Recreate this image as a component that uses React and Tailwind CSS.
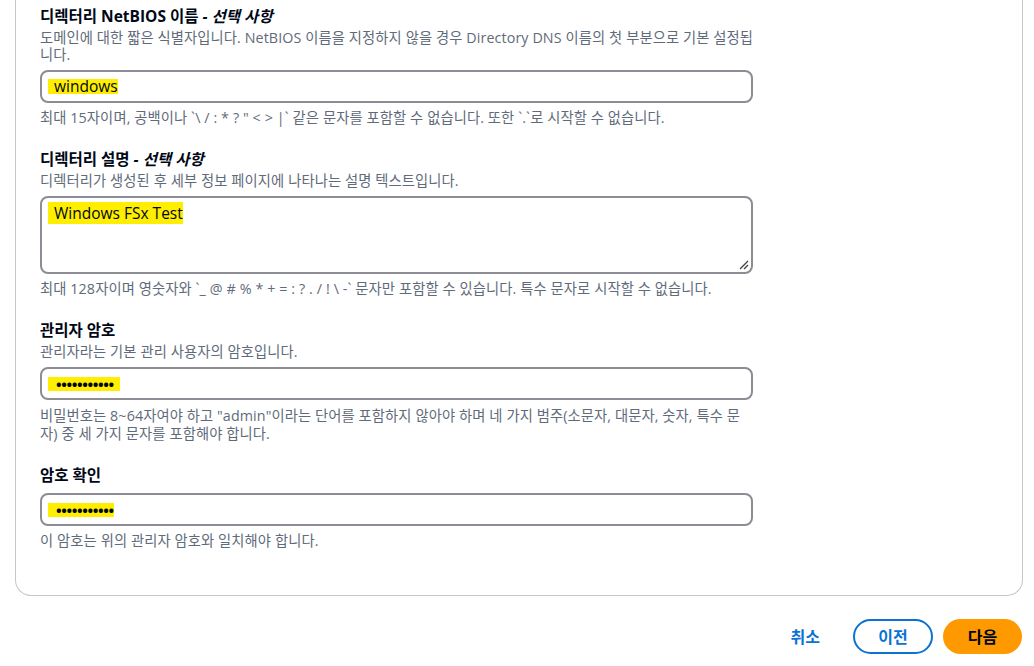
import React from "react";

const FONT = { fontFamily: '"Open Sans", "Noto Sans CJK KR", sans-serif' };

function Label({ children, optional }) {
  return (
    <div className="text-[15.5px] leading-[22px] font-bold text-[#000716]">
      {children}
      {optional && <i className="font-bold"> - 선택 사항</i>}
    </div>
  );
}

function Desc({ children, className = "" }) {
  return (
    <div className={"text-[14.3px] leading-[17px] text-[#5f6b7a] break-all tracking-[0.1px] " + className}>{children}</div>
  );
}

function Hl({ children, className = "" }) {
  return <span className={"bg-[#ffee00] " + className}>{children}</span>;
}

function Input({ children, className = "" }) {
  return (
    <div
      className={
        "h-[33px] w-[713px] border-2 border-[#8c8c94] rounded-[8px] flex items-center pl-[6px] text-[15.5px] text-[#000716] " +
        className
      }
    >
      {children}
    </div>
  );
}

export default function App() {
  return (
    <div className="w-[1034px] h-[666px] bg-white overflow-hidden" style={FONT}>
      <div className="ml-[15px] w-[1008px] border-x border-b border-[#c6c6cd] rounded-b-[16px] pl-[24px] pt-[5px] pb-[46px]">
        {/* Field 1 */}
        <Label optional>디렉터리 NetBIOS 이름</Label>
        <Desc className="w-[722px] mt-[2px]">
          도메인에 대한 짧은 식별자입니다. NetBIOS 이름을 지정하지 않을 경우 Directory DNS 이름의 첫 부분으로 기본 설정됩니다.
        </Desc>
        <Input className="mt-[7px]">
          <Hl className="pl-[6px] leading-[15px]">windows</Hl>
        </Input>
        <Desc className="mt-[6px]">
          최대 15자이며, 공백이나 `\ / : * ? " &lt; &gt; |` 같은 문자를 포함할 수 없습니다. 또한 `.`로 시작할 수 없습니다.
        </Desc>

        {/* Field 2 */}
        <div className="mt-[22px]">
          <Label optional>디렉터리 설명</Label>
        </div>
        <Desc className="mt-[2px]">디렉터리가 생성된 후 세부 정보 페이지에 나타나는 설명 텍스트입니다.</Desc>
        <div className="relative mt-[7px] h-[78px] w-[713px] border-2 border-[#8c8c94] rounded-[8px] pl-[6px] pt-[5px] text-[15.5px] leading-[20px] text-[#000716]">
          <Hl className="pl-[6px] leading-[15px]">Windows FSx Test</Hl>
          <svg className="absolute right-[2px] bottom-[2px]" width="10" height="10" viewBox="0 0 10 10">
            <line x1="1" y1="9" x2="9" y2="1" stroke="#444" strokeWidth="1.2" />
            <line x1="5" y1="9" x2="9" y2="5" stroke="#444" strokeWidth="1.2" />
          </svg>
        </div>
        <Desc className="mt-[6px]">
          최대 128자이며 영숫자와 `_ @ # % * + = : ? . / ! \ -` 문자만 포함할 수 있습니다. 특수 문자로 시작할 수 없습니다.
        </Desc>

        {/* Field 3 */}
        <div className="mt-[22px]">
          <Label>관리자 암호</Label>
        </div>
        <Desc className="mt-[2px]">관리자라는 기본 관리 사용자의 암호입니다.</Desc>
        <Input className="mt-[7px]">
          <Hl className="pl-[8px] pr-[6px] text-[15px] font-bold leading-[14px] tracking-[-0.4px]">•••••••••••</Hl>
        </Input>
        <Desc className="mt-[7px] w-[700px] leading-[18px]">
          비밀번호는 8~64자여야 하고 "admin"이라는 단어를 포함하지 않아야 하며 네 가지 범주(소문자, 대문자, 숫자, 특수 문자) 중 세 가지 문자를 포함해야 합니다.
        </Desc>

        {/* Field 4 */}
        <div className="mt-[21px]">
          <Label>암호 확인</Label>
        </div>
        <Input className="mt-[7px]">
          <Hl className="pl-[8px] text-[15px] font-bold leading-[14px] tracking-[-0.4px]">•••••••••••</Hl>
        </Input>
        <Desc className="mt-[6px]">이 암호는 위의 관리자 암호와 일치해야 합니다.</Desc>
      </div>

      {/* Buttons */}
      <div className="w-[1022px] flex justify-end items-center mt-[23px]">
        <button className="text-[16px] font-bold text-[#0972d3] mr-[33px]">취소</button>
        <button className="h-[35px] w-[80px] rounded-full border-2 border-[#0972d3] text-[16px] font-bold text-[#0972d3] mr-[10px]">
          이전
        </button>
        <button className="h-[35px] w-[79px] rounded-full bg-[#ff9900] text-[16px] font-bold text-[#000716]">
          다음
        </button>
      </div>
    </div>
  );
}
